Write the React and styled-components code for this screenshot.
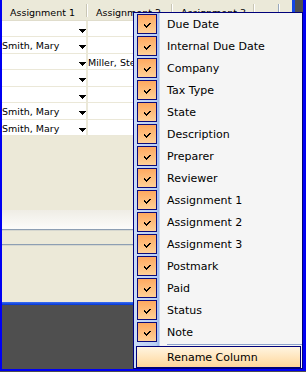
import React from 'react'
import styled, { createGlobalStyle } from 'styled-components'

const GlobalStyle = createGlobalStyle`
  html, body { margin: 0; padding: 0; }
  body {
    width: 306px;
    height: 372px;
    overflow: hidden;
    background: #4f4f4f;
  }
`

const Window = styled.div`
  position: relative;
  box-sizing: border-box;
  width: 306px;
  height: 371px;
  border-left: 2px solid #0000f2;
  border-right: 3px solid #0000f2;
  border-bottom: 2px solid #0000f2;
  background: #ece9d8;
  display: flex;
  flex-direction: column;
  font-family: "DejaVu Sans", Tahoma, sans-serif;
  color: #000;
  overflow: hidden;
`

/* grid header */
const Header = styled.div`
  display: flex;
  flex-shrink: 0;
  height: 21px;
  box-sizing: border-box;
  border-bottom: 1px solid #e0ddcc;
  background: #ebe9d9;
`

const HeaderCell = styled.div`
  width: ${p => p.$w}px;
  flex-shrink: 0;
  display: flex;
  background: ${p => p.$bg || 'transparent'};
`

const HeaderText = styled.span`
  flex: 1;
  padding: 5px 0 0 8px;
  font-size: 9.5px;
  line-height: 16px;
  white-space: nowrap;
  overflow: hidden;
`

const HeaderDivider = styled.span`
  width: 0;
  margin: 4px 0 3px;
  border-left: 1px solid ${p => p.$tone || '#c9c6b5'};
  border-right: 1px solid #fff;
`

/* grid body */
const Rows = styled.div`
  flex-shrink: 0;
  background: #fff;
`

const Row = styled.div`
  display: flex;
  height: 16px;
  box-sizing: border-box;
  border-bottom: 1px solid #ebe8d8;
  &:nth-child(even) { height: 17px; }
`

const Cell = styled.div`
  width: ${p => p.$w}px;
  flex-shrink: 0;
  box-sizing: border-box;
  border-right: 2px solid #ebe8d8;
  display: flex;
  align-items: center;
  justify-content: space-between;
  font-size: 9.5px;
  white-space: nowrap;
  overflow: hidden;
`

const CellText = styled.span`
  padding-top: 1px;
  line-height: 15px;
`

const DropArrow = styled.svg`
  flex-shrink: 0;
  margin-top: 4px;
  shape-rendering: crispEdges;
`

/* pane below the grid */
const Pane = styled.div`
  flex-shrink: 0;
  height: ${p => p.$h}px;
  background: #ece9d8;
`

const Sheen = styled.div`
  flex-shrink: 0;
  height: 19px;
  background: linear-gradient(#efede5, #fcfcfa);
`

const Rule = styled.div`
  flex-shrink: 0;
  height: 2px;
  box-sizing: border-box;
  border-top: 1px solid #8d9fb3;
  border-bottom: 1px solid #d6d7cf;
`

const BlueBand = styled.div`
  flex-shrink: 0;
  height: 3px;
  background: linear-gradient(#3b6ef0, #0034d4);
`

const Dark = styled.div`
  flex: 1;
  background: #4f4f4f;
`

/* popup column menu */
const Menu = styled.div`
  position: absolute;
  left: 131px;
  top: 12px;
  width: 170px;
  height: 357px;
  box-sizing: border-box;
  border: 1px solid #00007a;
  background: linear-gradient(to right, #cadbf7 0, #b9cff4 22px, #9ab8ec 25px, #f5f5f5 26px);
  display: flex;
  flex-direction: column;
  font-size: 11px;
`

const Item = styled.div`
  flex-shrink: 0;
  height: 22px;
  display: flex;
  align-items: center;
`

const Box = styled.span`
  width: 20px;
  height: 20px;
  box-sizing: border-box;
  margin-left: 3px;
  border: 1px solid #0b0b7d;
  background: linear-gradient(#ffa95f, #ffd197);
  display: flex;
  align-items: center;
  justify-content: center;
`

const Tick = styled.svg`
  margin-top: 2px;
  shape-rendering: crispEdges;
`

const Label = styled.span`
  margin-left: 10px;
  white-space: nowrap;
`

const Separator = styled.div`
  flex-shrink: 0;
  height: 1px;
  margin: 1px 0 1px 33px;
  background: #8ea3cc;
`

const Action = styled.button`
  all: unset;
  box-sizing: border-box;
  height: 22px;
  margin: 0 1px 0 2px;
  border: 1px solid #00007a;
  background: linear-gradient(#fff5e1, #ffd69b);
  padding-left: 30px;
  display: flex;
  align-items: center;
  font: 11px "DejaVu Sans", Tahoma, sans-serif;
  color: #000;
`

const columns = ['Due Date', 'Internal Due Date', 'Company', 'Tax Type', 'State', 'Description',
  'Preparer', 'Reviewer', 'Assignment 1', 'Assignment 2', 'Assignment 3', 'Postmark', 'Paid', 'Status', 'Note']

const rows = [
  ['', ''],
  ['Smith, Mary', ''],
  ['', 'Miller, Steve'],
  ['', ''],
  ['', ''],
  ['Smith, Mary', ''],
  ['Smith, Mary', ''],
]

function Arrow() {
  return (
    <DropArrow width="7" height="4" viewBox="0 0 7 4">
      <path d="M0 0h7v1H0z M1 1h5v1H1z M2 2h3v1H2z M3 3h1v1H3z" fill="#000" />
    </DropArrow>
  )
}

function CheckMark() {
  return (
    <Tick width="7" height="5" viewBox="0 0 7 5">
      <path d="M5 0h2v1H5z M0 1h1v1H0z M4 1h2v1H4z M0 2h2v1H0z M3 2h2v1H3z M1 3h3v1H1z M2 4h1v1H2z" fill="#000" />
    </Tick>
  )
}

export default function App() {
  return (
    <>
      <GlobalStyle />
      <Window>
        <Header>
          <HeaderCell $w={86}><HeaderText>Assignment 1</HeaderText><HeaderDivider /></HeaderCell>
          <HeaderCell $w={85}><HeaderText>Assignment 2</HeaderText><HeaderDivider /></HeaderCell>
          <HeaderCell $w={82}><HeaderText>Assignment 3</HeaderText><HeaderDivider /></HeaderCell>
          <HeaderCell $w={25}><HeaderText /><HeaderDivider $tone="#98a8bc" /></HeaderCell>
          <HeaderCell $w={12} />
          <HeaderCell $w={3} $bg="#1446e6" />
          <HeaderCell $w={8} $bg="#4f4f4f" />
        </Header>
        <Rows>
          {rows.map((r, i) => (
            <Row key={i}>
              <Cell $w={86}><CellText>{r[0]}</CellText><Arrow /></Cell>
              <Cell $w={85}><CellText>{r[1]}</CellText></Cell>
              <Cell $w={82} />
            </Row>
          ))}
        </Rows>
        <Pane $h={74} />
        <Sheen />
        <Rule />
        <Pane $h={13} />
        <Rule />
        <Pane $h={56} />
        <BlueBand />
        <Dark />

        <Menu>
          {columns.map(c => (
            <Item key={c}>
              <Box><CheckMark /></Box>
              <Label>{c}</Label>
            </Item>
          ))}
          <Separator />
          <Action>Rename Column</Action>
        </Menu>
      </Window>
    </>
  )
}
